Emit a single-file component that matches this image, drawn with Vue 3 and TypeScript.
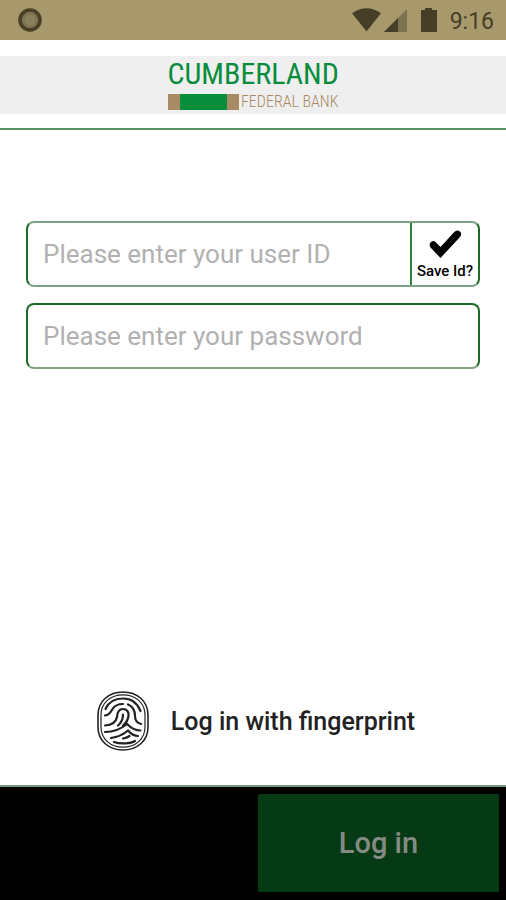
<script setup lang="ts">
import { ref } from 'vue'

const userId = ref('')
const password = ref('')
const saveId = ref(true)
</script>

<template>
  <div class="screen">
    <div class="status">
      <svg class="recorder" width="24" height="24" viewBox="0 0 24 24" aria-hidden="true">
        <circle cx="12" cy="12" r="10" fill="#7f7452" stroke="#4a4028" stroke-width="3.6" />
        <circle cx="12" cy="12" r="5.5" fill="#8b7f5b" />
      </svg>
      <svg width="88" height="26" viewBox="0 0 88 26" aria-hidden="true">
        <path d="M1 6.2Q15.500-3.800 30 6.200L15.500 24.500Z" fill="#463e27" />
        <path d="M56 2V25H33Z" fill="#7d7250" />
        <path d="M47 11V25H33Z" fill="#463e27" />
        <path d="M70 3H74V1H81V3H86V25H70Z" fill="#463e27" />
      </svg>
      <span class="clock">9:16</span>
    </div>

    <header class="header">
      <div class="brand">
        <div class="logo">
          <span class="logo-name">CUMBERLAND</span>
          <div class="logo-line">
            <span class="logo-bar"></span>
            <span class="logo-sub">FEDERAL BANK</span>
          </div>
        </div>
      </div>
    </header>

    <main class="content">
      <form id="login" class="form" @submit.prevent>
        <div class="field first">
          <input v-model="userId" class="text" type="text" aria-label="User ID" placeholder="Please enter your user ID" />
          <label class="save">
            <span class="tick">
              <input v-model="saveId" class="tick-box" type="checkbox" />
              <svg v-show="saveId" class="tick-mark" width="34" height="30" viewBox="0 0 34 30" aria-hidden="true">
                <path d="M2.200 13.800Q5 10.500 8 13.500L12.500 18L26.500 2.800Q30 0 32.500 3Q34 5.500 32 8L12.500 29L2.500 18.500Q1 16 2.200 13.800Z" fill="#000" />
              </svg>
            </span>
            <span>Save Id?</span>
          </label>
        </div>
        <div class="field">
          <input v-model="password" class="text" type="password" aria-label="Password" placeholder="Please enter your password" />
        </div>
      </form>

      <button class="fingerprint" type="button">
        <svg width="52" height="60" viewBox="0 0 52 60" fill="none" stroke="#222" stroke-width="2.200" stroke-linecap="round" aria-hidden="true">
          <path d="M26 1C40 1 51 10 51 24V36C51 50 40 59 26 59S1 50 1 36V24C1 10 12 1 26 1Z" stroke-width="1.600" />
          <path d="M26 3.800C38.500 3.800 48 12 48 24V36C48 48 38.500 56.200 26 56.200S4 48 4 36V24C4 12 13.500 3.800 26 3.800Z" stroke-width="1.200" />
          <path d="M8.500 18C12 10 18 7.500 26 7.500S40 11 43.500 20" />
          <path d="M8 24.500C13 24 13.500 21 15.500 18C18 14 21 13 26 13" />
          <path d="M31 13.500C36 15.500 38 19 38 25C38 30 40 32 44 33" />
          <path d="M8 34.500C16 34 19 31 20 26C20.500 19 24 18 26 18C30 18 32 21 31.500 25C31 29 29 32 26 34.500" />
          <path d="M26 23.500C26 29 24 32 21 34.500" />
          <path d="M8 41C18 41 24 38 30 33C34 37 38 39.500 43.500 39.500" />
          <path d="M14 47C22 46 27 43 31 39.500C34 43 38 45 41 45" />
          <path d="M17 51C24 53.500 34 52.500 38 50" />
          <path d="M26 47.500C29 47 31 46 32.500 45" />
        </svg>
        <span>Log in with fingerprint</span>
      </button>
    </main>

    <footer class="footer">
      <button class="login" type="submit" form="login">Log in</button>
    </footer>
  </div>
</template>

<style>
body {
  margin: 0;
  background: #fff;
}
</style>

<style scoped>
.screen {
  display: flex;
  flex-direction: column;
  min-height: 100vh;
  font-family: Roboto, "Liberation Sans", sans-serif;
  color: #222;
}

.status {
  display: flex;
  align-items: center;
  box-sizing: border-box;
  height: 40px;
  padding: 0 12px 0 18px;
  background: #a8996c;
}

.recorder {
  margin-right: auto;
}

.clock {
  margin-left: 11px;
  padding-top: 3px;
  font-size: 23px;
  line-height: 28px;
  color: #463e27;
}

.header {
  padding: 16px 0 14px;
  border-bottom: 2px solid #55905f;
}

.brand {
  display: flex;
  justify-content: center;
  height: 58px;
  background: #efefef;
}

.logo {
  display: flex;
  flex-direction: column;
  gap: 2px;
  width: 171px;
}

.logo-name {
  font-family: "Roboto Condensed", "Open Sans Condensed", "Liberation Sans Narrow", Roboto, sans-serif;
  font-size: 30px;
  line-height: 36px;
  white-space: nowrap;
  color: #078d3c;
}

.logo-line {
  display: flex;
  align-items: center;
  justify-content: space-between;
}

.logo-bar {
  box-sizing: border-box;
  width: 71px;
  height: 16px;
  border: solid #a88a64;
  border-width: 0 12px;
  background: #078d3c;
}

.logo-sub {
  font-family: "Roboto Condensed", "Open Sans Condensed", "Liberation Sans Narrow", Roboto, sans-serif;
  font-size: 16px;
  font-weight: 300;
  line-height: 16px;
  white-space: nowrap;
  color: #a88a64;
}

.content {
  display: flex;
  flex: 1;
  flex-direction: column;
  justify-content: space-between;
  padding: 91px 26px 34px;
}

.form {
  display: flex;
  flex-direction: column;
  gap: 16px;
}

.field {
  display: flex;
  box-sizing: border-box;
  height: 66px;
  border: 2px solid #1d6b25;
  border-bottom-color: #7fa381;
  border-radius: 8px;
}

.field.first {
  border-top-color: #7fa381;
}

.text {
  flex: 1;
  min-width: 0;
  padding: 0 15px;
  border: 0;
  outline: 0;
  background: transparent;
  font: inherit;
  font-size: 26px;
  color: #222;
}

.text::placeholder {
  color: #b1b1b1;
  opacity: 1;
}

.save {
  display: flex;
  flex-direction: column;
  align-items: center;
  justify-content: center;
  box-sizing: border-box;
  width: 68px;
  border-left: 2px solid #2c8437;
  font-size: 15px;
  font-weight: 500;
  line-height: 20px;
  white-space: nowrap;
  color: #000;
}

.tick {
  display: grid;
  height: 34px;
  place-items: center;
}

.tick-box,
.tick-mark {
  grid-area: 1 / 1;
}

.tick-box {
  appearance: none;
  width: 34px;
  height: 30px;
  margin: 0;
}

.tick-mark {
  pointer-events: none;
}

.fingerprint {
  display: flex;
  align-items: center;
  align-self: center;
  gap: 22px;
  padding: 0 0 0 6px;
  border: 0;
  background: none;
  font: inherit;
  font-size: 25px;
  font-weight: 500;
  color: #222;
}

.footer {
  display: flex;
  justify-content: flex-end;
  padding: 7px 7px 8px;
  border-top: 2px solid #6f9a80;
  background: #000;
}

.login {
  width: 49%;
  height: 98px;
  border: 0;
  background: #053a14;
  font: inherit;
  font-size: 29px;
  font-weight: 500;
  color: #858b84;
}
</style>
